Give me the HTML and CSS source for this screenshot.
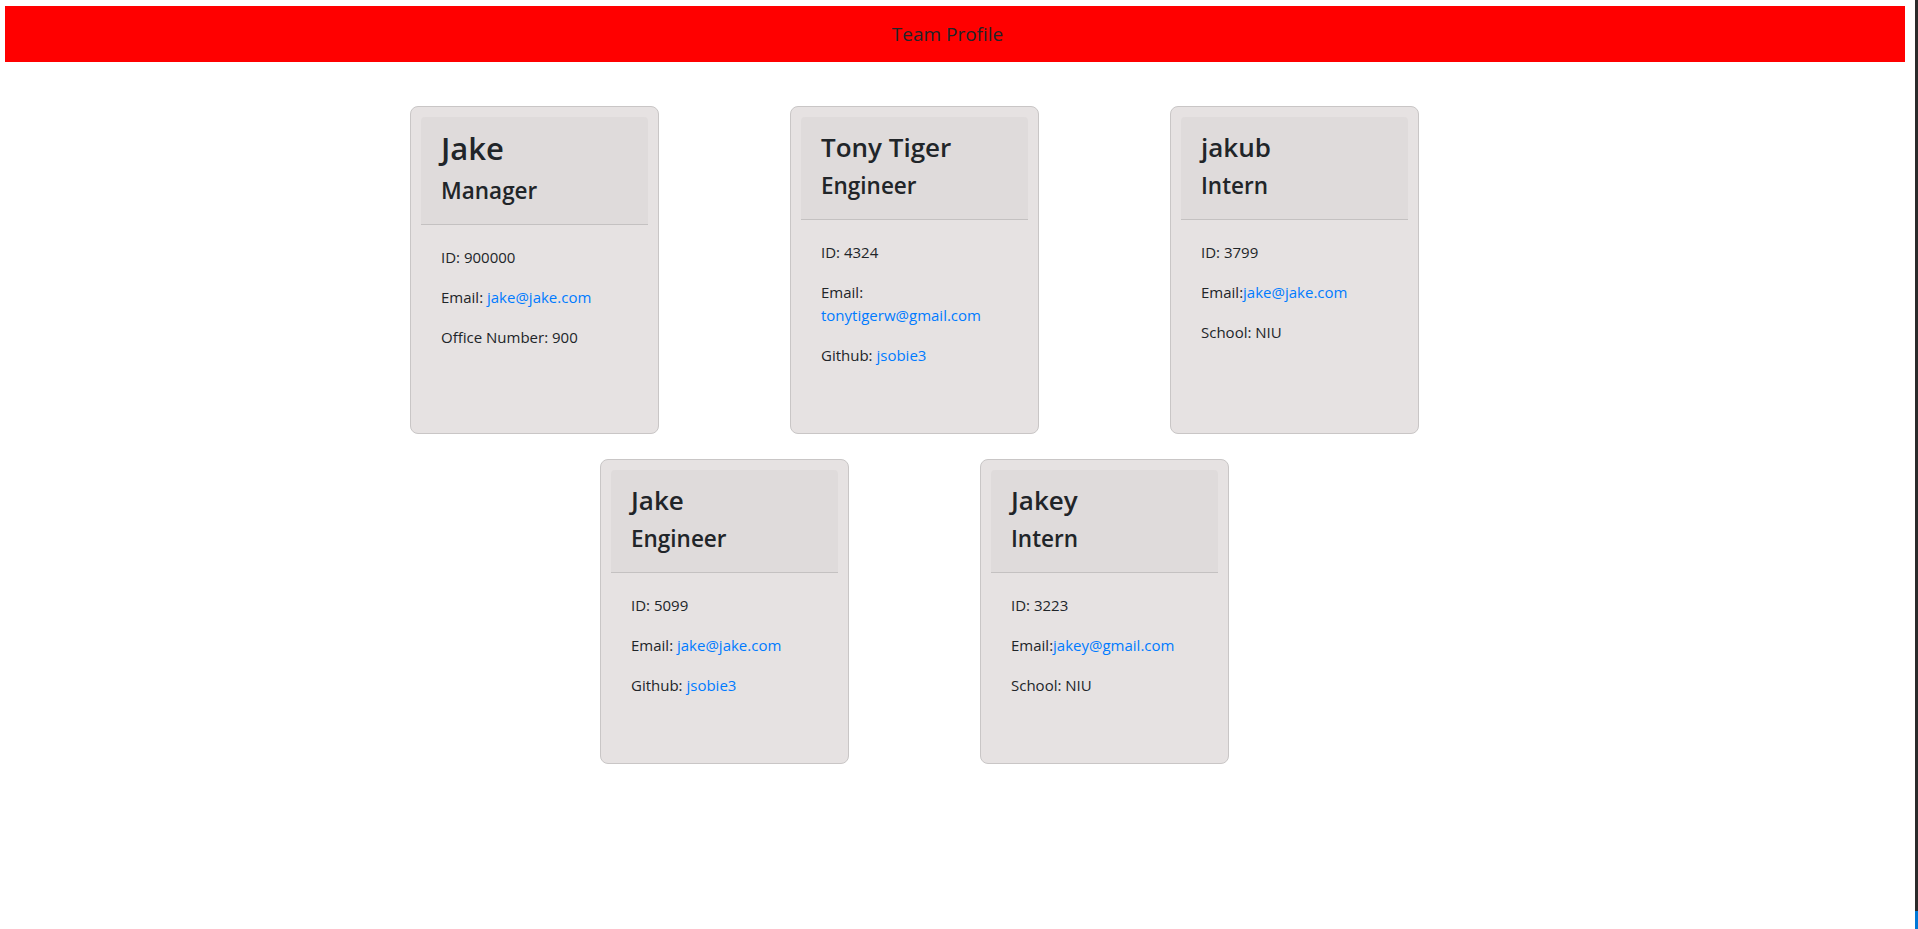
FILE: index.html
```html
<!DOCTYPE html>
<html lang="en">
<head>
<meta charset="utf-8">
<title>Team Profile</title>
<link rel="stylesheet" href="styles.css">
</head>
<body>
<div class="window">
  <div class="page">
    <header class="banner">Team Profile</header>
    <main class="team">
      <article class="card card-manager">
        <div class="card-header">
          <h2 class="name">Jake</h2>
          <h3 class="role">Manager</h3>
        </div>
        <div class="card-body">
          <p>ID: 900000</p>
          <p>Email: <a href="#">jake@jake.com</a></p>
          <p>Office Number: 900</p>
        </div>
      </article>
      <article class="card">
        <div class="card-header">
          <h2 class="name">Tony Tiger</h2>
          <h3 class="role">Engineer</h3>
        </div>
        <div class="card-body">
          <p>ID: 4324</p>
          <p>Email: <a href="#">tonytigerw@gmail.com</a></p>
          <p>Github: <a href="#">jsobie3</a></p>
        </div>
      </article>
      <article class="card">
        <div class="card-header">
          <h2 class="name">jakub</h2>
          <h3 class="role">Intern</h3>
        </div>
        <div class="card-body">
          <p>ID: 3799</p>
          <p>Email:<a href="#">jake@jake.com</a></p>
          <p>School: NIU</p>
        </div>
      </article>
      <article class="card">
        <div class="card-header">
          <h2 class="name">Jake</h2>
          <h3 class="role">Engineer</h3>
        </div>
        <div class="card-body">
          <p>ID: 5099</p>
          <p>Email: <a href="#">jake@jake.com</a></p>
          <p>Github: <a href="#">jsobie3</a></p>
        </div>
      </article>
      <article class="card">
        <div class="card-header">
          <h2 class="name">Jakey</h2>
          <h3 class="role">Intern</h3>
        </div>
        <div class="card-body">
          <p>ID: 3223</p>
          <p>Email:<a href="#">jakey@gmail.com</a></p>
          <p>School: NIU</p>
        </div>
      </article>
    </main>
  </div>
  <div class="edge"><span class="edge-accent"></span></div>
</div>
</body>
</html>
```
FILE: styles.css
```css
* {
  box-sizing: border-box;
}

html, body {
  margin: 0;
  padding: 0;
  background: #ffffff;
}

body {
  font-family: "Open Sans", "Noto Sans", sans-serif;
  color: #212529;
}

.window {
  display: flex;
  height: 100vh;
  overflow: hidden;
}

.page {
  flex: 1;
  min-width: 0;
}

.edge {
  width: 3px;
  background: #2b2b2b;
  display: flex;
  flex-direction: column;
  justify-content: flex-end;
}

.edge-accent {
  display: block;
  height: 18px;
  background: #0078d7;
}

.banner {
  margin: 6px 10px 0 5px;
  height: 56px;
  background: #ff0000;
  display: flex;
  align-items: center;
  justify-content: center;
  padding-right: 15px;
  font-size: 19px;
  color: #212529;
}

.team {
  width: 1009px;
  margin: 44px 0 0 410px;
  display: flex;
  flex-wrap: wrap;
  justify-content: center;
  column-gap: 131px;
  row-gap: 25px;
}

.card {
  width: 249px;
  background: #e6e2e2;
  border: 1px solid #c9c6c6;
  border-radius: 8px;
  padding: 10px;
  display: flex;
  flex-direction: column;
}

.card-header {
  background: #dfdbdb;
  border-bottom: 1px solid #c4c1c1;
  border-radius: 4px 4px 0 0;
  padding: 14px 19px 19px 20px;
}

.name {
  margin: 0;
  font-size: 26px;
  line-height: 32px;
  font-weight: 600;
}

.role {
  margin: 9px 0 0;
  font-size: 22.5px;
  line-height: 28px;
  font-weight: 600;
}

.card-manager .name {
  font-size: 31px;
  line-height: 34px;
}

.card-manager .role {
  margin-top: 12px;
}

.card-body {
  padding: 21px 20px 39px;
  font-size: 15px;
  line-height: 23px;
}

.card-body p {
  margin: 0 0 17px;
}

.card-body a {
  color: #007bff;
  text-decoration: none;
}
```
